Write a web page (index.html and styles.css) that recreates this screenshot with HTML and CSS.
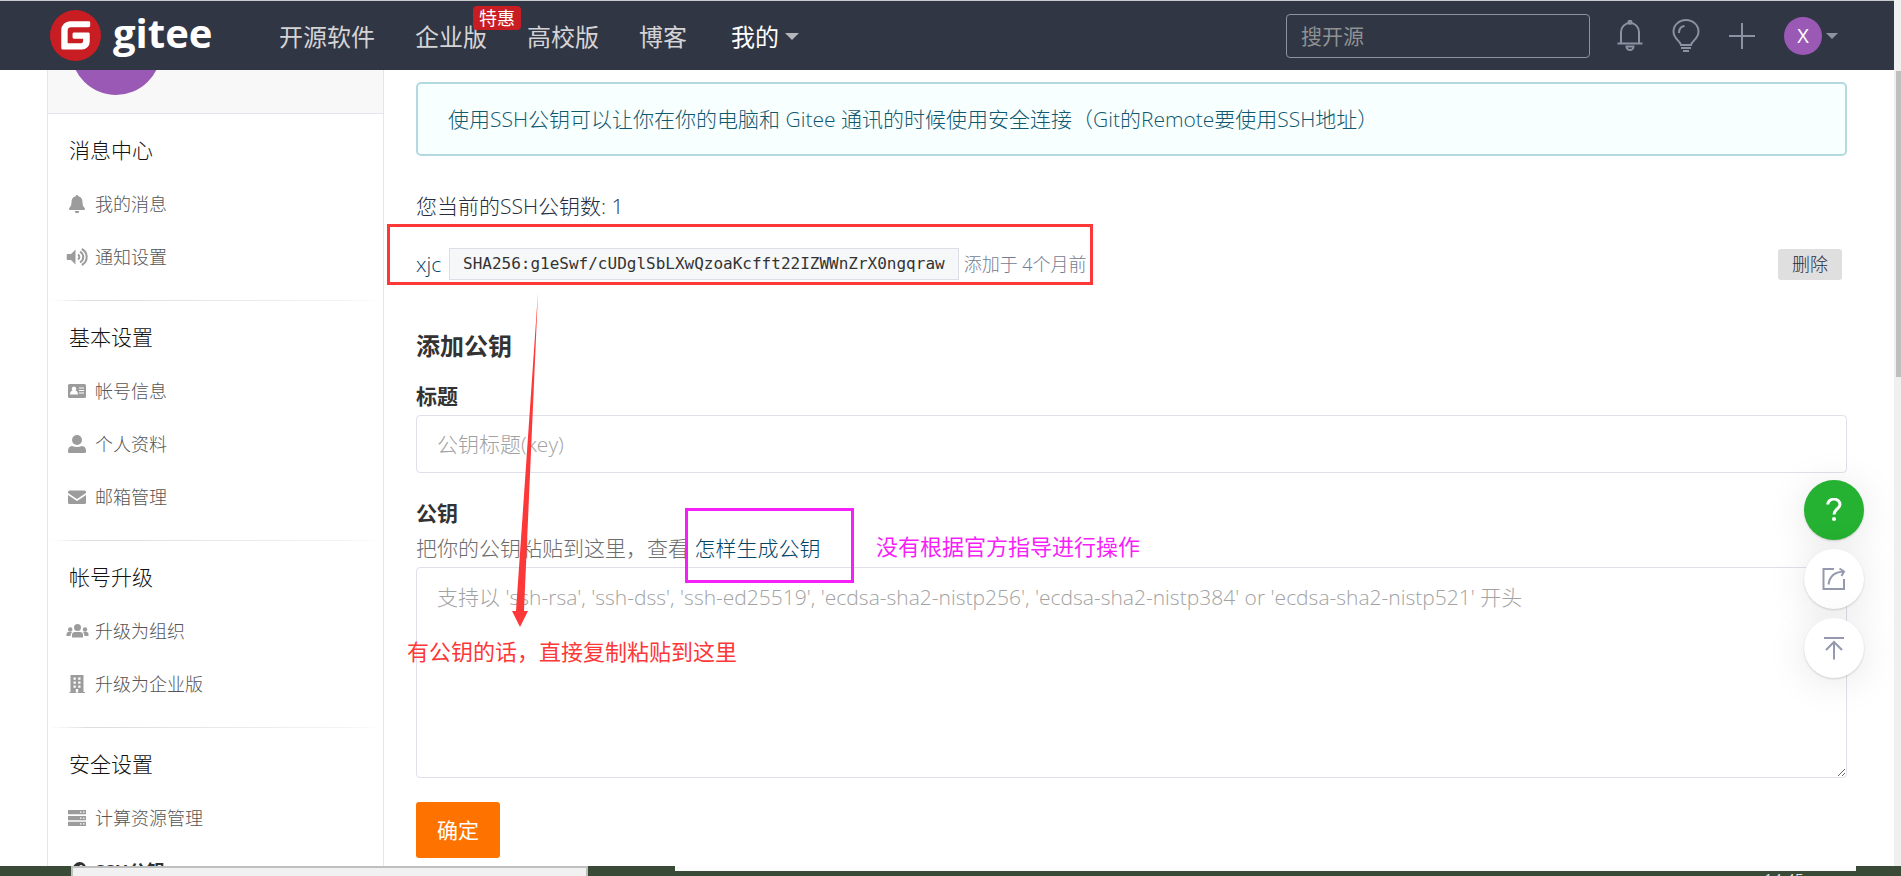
FILE: index.html
```html
<!DOCTYPE html>
<html lang="zh-CN">
<head>
<meta charset="utf-8">
<title>SSH公钥 - Gitee</title>
<link rel="stylesheet" href="styles.css">
</head>
<body>
<div class="window">
  <header class="topbar">
    <a class="logo" href="#">
      <svg class="logo-mark" viewBox="0 0 52 52" aria-hidden="true"><circle cx="26" cy="26" r="26" fill="#c71d23"/><path d="M39.500 11.500H20.500A9 9 0 0 0 11.500 20.500V38.800A1.600 1.600 0 0 0 13.100 40.400H32.500A8 8 0 0 0 40.500 32.400V24.500A1.500 1.500 0 0 0 39 23H24.500A1.500 1.500 0 0 0 23 24.500V27.800A1.500 1.500 0 0 0 24.500 29.300H33.800V31A3 3 0 0 1 30.800 34H18V21A3.500 3.500 0 0 1 21.500 17.500H39.500A1.500 1.500 0 0 0 41 16V13A1.500 1.500 0 0 0 39.500 11.500Z" fill="#fff"/></svg>
      <span class="logo-text">gitee</span>
    </a>
    <nav class="nav">
      <a href="#">开源软件</a>
      <a class="nav-promo" href="#">企业版<span class="promo">特惠</span></a>
      <a href="#">高校版</a>
      <a href="#">博客</a>
      <a class="nav-mine" href="#">我的<i class="caret"></i></a>
    </nav>
    <input class="search" type="search" placeholder="搜开源" aria-label="搜开源">
    <div class="tools">
      <a class="tool" href="#" aria-label="通知"><svg width="26" height="32" viewBox="0 0 26 32"><path d="M0.500 23.500H25.500M4 23V12A9 9 0 0 1 22 12V23M9.500 26.500H16.500A3.500 3.500 0 0 1 9.500 26.500Z"/><circle cx="13" cy="2.200" r="1.500"/></svg></a>
      <a class="tool" href="#" aria-label="帮助"><svg width="28" height="34" viewBox="0 0 28 34"><path d="M9 26C8.500 22 1.500 20 1.500 12.500A12.500 11.500 0 0 1 26.500 12.500C26.500 20 19.500 22 19 26ZM7 14C7 10 9 7.500 12.500 7M9 29H19M11 32H17"/></svg></a>
      <a class="tool" href="#" aria-label="新建"><svg width="26" height="26" viewBox="0 0 26 26"><path d="M0 13H26M13 0V26"/></svg></a>
      <a class="account" href="#"><span class="avatar-small">X</span><i class="caret caret-small"></i></a>
    </div>
  </header>

  <main class="page">
    <aside class="sidebar">
      <div class="profile"><span class="avatar-large"></span></div>
      <section class="menu">
        <h2>消息中心</h2>
        <a href="#"><svg viewBox="0 0 24 20"><path d="M12 1a1.300 1.300 0 0 0-1.300 1.300C7.800 3 6.500 5 6.500 8c0 4-1.500 5.200-2.300 6.200-.5.800 0 1.900 1 1.900h13.600c1 0 1.500-1.100 1-1.900-.8-1-2.300-2.200-2.300-6.200 0-3-1.300-5-4.200-5.700A1.300 1.300 0 0 0 12 1ZM9.700 17a2.300 2.300 0 0 0 4.600 0Z"/></svg>我的消息</a>
        <a href="#"><svg viewBox="0 0 24 20"><path d="M2.500 7H6l4.500-4.500v15L6 13H2.500a.8.800 0 0 1-.8-.8V7.800A.8.800 0 0 1 2.500 7Z"/><path class="line" d="M13 7.500a3 3 0 0 1 0 5M15 4.700a6 6 0 0 1 0 10.600M16.800 2a9 9 0 0 1 0 16"/></svg>通知设置</a>
      </section>
      <section class="menu">
        <h2>基本设置</h2>
        <a href="#"><svg viewBox="0 0 24 20"><path fill-rule="evenodd" d="M4.500 3h15A1.500 1.500 0 0 1 21 4.500v11a1.500 1.500 0 0 1-1.500 1.500h-15A1.500 1.500 0 0 1 3 15.500v-11A1.500 1.500 0 0 1 4.500 3ZM9 5.500a2.300 2.300 0 0 0-1.500 4C6 10 5 11 5 13.500h8c0-2.500-1-3.500-2.500-4A2.300 2.300 0 0 0 9 5.500ZM14 6.500v1h5v-1ZM14 9v1h5V9ZM14 11.500v1h5v-1Z"/></svg>帐号信息</a>
        <a href="#"><svg viewBox="0 0 24 20"><circle cx="12" cy="6" r="5"/><path d="M7 12q5 2 10 0 4 .5 4 5a1.500 1.500 0 0 1-1.500 2h-15A1.500 1.500 0 0 1 3 17q0-4.500 4-5Z"/></svg>个人资料</a>
        <a href="#"><svg viewBox="0 0 24 20"><path d="M4.500 3.500h15A1.500 1.500 0 0 1 21 5v1l-9 6-9-6V5a1.500 1.500 0 0 1 1.500-1.500ZM3 8l9 6 9-6v7.500a1.500 1.500 0 0 1-1.500 1.500h-15A1.500 1.500 0 0 1 3 15.500Z"/></svg>邮箱管理</a>
      </section>
      <section class="menu">
        <h2>帐号升级</h2>
        <a href="#"><svg viewBox="0 0 24 20"><circle cx="12.500" cy="6.500" r="3.500"/><circle cx="5.200" cy="8.500" r="2.200"/><circle cx="20" cy="8.500" r="2.200"/><path d="M7 16.500V14q0-3 3-3h5q3 0 3 3v2.500ZM1.500 15v-2q0-2 2-2h3.500q-1.500 1.500-1.500 4ZM23.500 15v-2q0-2-2-2H18q1.500 1.500 1.500 4Z"/></svg>升级为组织</a>
        <a href="#"><svg viewBox="0 0 24 20"><path fill-rule="evenodd" d="M5.500 1h13v17H20v1H4.500v-1h1ZM8.500 3.500v2.300h2.300V3.500ZM13.200 3.500v2.300h2.300V3.500ZM8.500 7.500v2.300h2.300V7.500ZM13.200 7.500v2.300h2.300V7.500ZM8.500 11.500v2.300h2.300v-2.300ZM13.200 11.500v2.300h2.300v-2.300ZM10.800 15v3.500h2.400V15Z"/></svg>升级为企业版</a>
      </section>
      <section class="menu">
        <h2>安全设置</h2>
        <a href="#"><svg viewBox="0 0 24 20"><path fill-rule="evenodd" d="M3 2h18v4.300H3ZM3 7.900h18v4.300H3ZM3 13.800h18v4.300H3ZM15 3.500v1.300h1.500V3.500ZM18 3.500v1.300h1.500V3.500ZM15 9.400v1.300h1.500V9.400ZM18 9.400v1.300h1.500V9.400ZM15 15.300v1.300h1.500v-1.300ZM18 15.300v1.300h1.500v-1.300Z"/></svg>计算资源管理</a>
        <a class="current" href="#"><svg viewBox="0 0 24 20"><path fill-rule="evenodd" d="M14.500 1a6.500 6.500 0 1 1-2 12.600L10.500 16H8v3H3v-4l5.500-5.500A6.500 6.500 0 0 1 14.500 1ZM16 4a2 2 0 1 0 .1 0Z"/></svg>SSH公钥</a>
      </section>
    </aside>

    <div class="content">
      <p class="notice">使用SSH公钥可以让你在你的电脑和 Gitee 通讯的时候使用安全连接（Git的Remote要使用SSH地址）</p>
      <p class="count">您当前的SSH公钥数: 1</p>
      <div class="key-row">
        <a class="key-name" href="#">xjc</a>
        <code>SHA256:g1eSwf/cUDglSbLXwQzoaKcfft22IZWWnZrX0ngqraw</code>
        <span class="key-date">添加于 4个月前</span>
        <button class="delete" type="button">删除</button>
      </div>
      <form class="key-form">
        <h1>添加公钥</h1>
        <label for="key-title">标题</label>
        <input id="key-title" type="text" placeholder="公钥标题(key)">
        <label class="key-label" for="key-body">公钥</label>
        <p class="hint">把你的公钥粘贴到这里，查看 <a href="#">怎样生成公钥</a></p>
        <textarea id="key-body" placeholder="支持以 'ssh-rsa', 'ssh-dss', 'ssh-ed25519', 'ecdsa-sha2-nistp256', 'ecdsa-sha2-nistp384' or 'ecdsa-sha2-nistp521' 开头"></textarea>
        <button class="submit" type="button">确定</button>
      </form>
    </div>
  </main>

  <footer class="desktop">
    <span class="under-left"></span>
    <span class="under-right"></span>
    <span class="clock">14:45</span>
  </footer>

  <div class="scrollbar"><span class="thumb"></span></div>

  <div class="floaters">
    <button class="float help" type="button" aria-label="帮助"><svg width="16" height="24" viewBox="0 0 16 24"><path d="M1.800 6.500A6 5.300 0 0 1 14 6.500C14 11 8 11 8 16.500"/><circle cx="8" cy="21" r="2"/></svg></button>
    <button class="float" type="button" aria-label="分享"><svg width="24" height="24" viewBox="0 0 24 24"><path d="M12 2H1.500V22H22V12M6.500 17.500C7.500 10 12 5 21.500 4.500M17.500 1.500L22 4.500L19.500 9"/></svg></button>
    <button class="float" type="button" aria-label="返回顶部"><svg width="22" height="24" viewBox="0 0 22 24"><path d="M1 2H21M11 23.500V6M3 14L11 6L19 14"/></svg></button>
  </div>

  <div class="marks">
    <span class="mark-box mark-key"></span>
    <span class="mark-box mark-link"></span>
    <svg class="mark-arrow" width="28" height="336" viewBox="0 0 28 336"><path d="M26 0L12 319H16L8 335L0 319H4Z" fill="#fd3838"/></svg>
    <span class="mark-text mark-paste">有公钥的话，直接复制粘贴到这里</span>
    <span class="mark-text mark-guide">没有根据官方指导进行操作</span>
  </div>
</div>
</body>
</html>
```
FILE: styles.css
```css
* { box-sizing: border-box; }
body {
  margin: 0;
  font-family: "Open Sans", "Noto Sans CJK SC", sans-serif;
  font-size: 21px;
  font-weight: 300;
  line-height: 32px;
  color: #262d40;
  background: #fff;
}
h1, h2, p { margin: 0; }
a { color: inherit; text-decoration: none; }
button, input, textarea { font: inherit; }

.window {
  position: relative;
  display: flex;
  flex-direction: column;
  height: 100vh;
  overflow: hidden;
}

/* Top bar */
.topbar {
  flex: none;
  display: flex;
  align-items: center;
  height: 70px;
  margin-right: 7px;
  padding: 0 56px 0 50px;
  border-top: 1px solid #c8cacb;
  background: #303643;
  font-weight: 400;
}
.logo {
  display: flex;
  align-items: center;
  width: 229px;
  gap: 12px;
  color: #fff;
}
.logo-mark { width: 51px; height: 51px; }
.logo-text { font-size: 40px; font-weight: 700; line-height: 48px; padding-bottom: 6px; }
.nav { display: flex; gap: 40px; padding-top: 2px; font-size: 24px; color: #d4d4d6; }
.nav-promo { position: relative; }
.promo {
  position: absolute;
  left: 58px;
  top: -15px;
  padding: 0 6px;
  border-radius: 4px;
  background: #c71d23;
  color: #fff;
  font-size: 18px;
  line-height: 24px;
  white-space: nowrap;
}
.nav .nav-mine { display: flex; align-items: center; gap: 6px; padding-left: 4px; color: #fff; }
.caret {
  border: 7px solid transparent;
  border-top-color: #b4b6bb;
  border-bottom: 0;
}
.caret-small { border-width: 6px; border-bottom: 0; border-top-color: #8c92a4; }
.search {
  width: 304px;
  height: 44px;
  margin-left: auto;
  padding: 0 14px;
  border: 1px solid #8c92a4;
  border-radius: 4px;
  background: transparent;
  color: #fff;
  outline: 0;
}
.search::placeholder { color: #8f9193; }
.tools { display: flex; align-items: center; margin-left: 27px; gap: 29px; }
.tool { display: flex; }
.tool svg { fill: none; stroke: #8c92a4; stroke-width: 2; }
.account { display: flex; align-items: center; gap: 4px; }
.avatar-small {
  width: 38px;
  height: 38px;
  border-radius: 50%;
  background: #9b59b6;
  color: #fff;
  font-size: 20px;
  line-height: 38px;
  text-align: center;
}

/* Page */
.page {
  flex: 1;
  min-height: 0;
  display: flex;
  align-items: flex-start;
  gap: 32px;
  margin-right: 7px;
  padding: 0 47px;
  overflow: hidden;
}
.sidebar { flex: none; width: 337px; border: 1px solid #e3e6eb; border-width: 0 1px; }
.profile {
  display: flex;
  align-items: flex-end;
  height: 44px;
  padding: 0 0 18px 23px;
  overflow: hidden;
  background: #f8f8f8;
  border-bottom: 1px solid #e3e6eb;
}
.avatar-large { flex: none; width: 90px; height: 90px; border-radius: 50%; background: #9b59b6; }
.menu {
  margin: 0 2px;
  padding: 9px 0 17px 19px;
  border-bottom: 1px solid;
  border-image: linear-gradient(90deg, #fff, #ddd 12%, #f4f4f4 90%, #fff) 1;
}
.menu h2 { font-size: 21px; font-weight: 300; line-height: 54px; color: #111; }
.menu a { display: flex; align-items: center; height: 53px; gap: 6px; margin-left: -4px; font-size: 18px; color: #555; }
.menu svg { width: 24px; height: 20px; fill: #9c9c9c; }
.menu .line { fill: none; stroke: #9c9c9c; stroke-width: 2; }
.menu .current { color: #303030; font-weight: 700; }
.menu .current svg { fill: #303030; }

.content { flex: 1; min-width: 0; }
.notice {
  margin-top: 12px;
  padding: 19px 30px;
  border: 2px solid #b3d9e1;
  border-radius: 5px;
  background: #f8ffff;
  color: #10586f;
}
.count { margin-top: 34px; }
.key-row { display: flex; align-items: center; margin-top: 26px; }
.key-name { color: #004466; width: 33px; }
code {
  padding: 0 13px;
  border: 1px solid #dce0e6;
  background: #f6f7f9;
  color: #333;
  font: 400 16px/30px "DejaVu Sans Mono", monospace;
}
.key-date { margin-left: 5px; font-size: 18px; color: #747b90; }
.delete {
  height: 31px;
  margin: 0 5px 0 auto;
  padding: 0 14px;
  border: 0;
  border-radius: 3px;
  background: #dfdfe0;
  color: #262d40;
  font-size: 18px;
  line-height: 31px;
}
.key-form { display: flex; flex-direction: column; align-items: stretch; margin-top: 48px; }
.key-form h1 { font-size: 24px; line-height: 36px; color: #333; }
.key-form label { margin-top: 16px; font-weight: 700; color: #333; }
.key-form .key-label { margin-top: 24px; }
.key-form input, .key-form textarea {
  display: block;
  width: 100%;
  border: 1px solid #dfe0ea;
  border-radius: 4px;
  background: #fff;
  outline: 0;
}
.key-form input { height: 58px; margin-top: 3px; padding: 0 20px; }
.key-form textarea { height: 211px; padding: 13px 20px; resize: vertical; }
.key-form ::placeholder { color: #a2a2a2; }
.hint { line-height: 38px; color: #6c6c6c; }
.hint a { color: #004466; }
.submit {
  align-self: flex-start;
  height: 56px;
  margin-top: 24px;
  padding: 0 21px;
  border: 0;
  border-radius: 3px;
  background: #fe7300;
  color: #fff;
  font-weight: 400;
}

/* Desktop strip below the browser window */
.desktop {
  flex: none;
  display: flex;
  height: 10px;
  overflow: hidden;
  background: #394a36;
}
.under-left { width: 517px; margin-left: 71px; border: 2px solid #bfbfbf; border-bottom: 0; background: #f1f1f1; }
.under-right { flex: 1; height: 5px; margin: 0 45px 0 87px; background: #fcfcfc; }
.clock { position: absolute; right: 97px; bottom: -16px; font-size: 16px; line-height: 24px; color: #fff; }

.scrollbar { position: absolute; top: 0; right: 0; bottom: 10px; width: 7px; padding: 71px 0 0 2px; background: #f0f0f0; }
.thumb { display: block; height: 306px; background: #bfbfbf; }

/* Floating buttons */
.floaters { position: absolute; top: 480px; right: 37px; display: flex; flex-direction: column; gap: 9px; }
.float {
  display: grid;
  place-items: center;
  width: 60px;
  height: 60px;
  padding: 0;
  border: 0;
  border-radius: 50%;
  background: #fff;
  box-shadow: 0 1px 2px rgba(0, 0, 0, .16), 0 4px 40px rgba(0, 0, 0, .1);
}
.float svg { fill: none; stroke: #9499ae; stroke-width: 2; }
.float.help { background: #25b131; }
.float.help svg { stroke: #fff; stroke-width: 3; }
.float.help circle { fill: #fff; stroke: none; }

/* Annotations */
.marks { position: absolute; inset: 0; pointer-events: none; font-size: 22px; font-weight: 400; }
.mark-box { position: absolute; border: 3px solid #fd3838; }
.mark-key { left: 387px; top: 224px; width: 706px; height: 61px; }
.mark-link { left: 685px; top: 508px; width: 169px; height: 75px; border-color: #f71ff7; }
.mark-arrow { position: absolute; left: 512px; top: 292px; }
.mark-text { position: absolute; white-space: nowrap; }
.mark-paste { left: 407px; top: 635px; color: #fd3838; }
.mark-guide { left: 876px; top: 530px; color: #f71ff7; }
```
